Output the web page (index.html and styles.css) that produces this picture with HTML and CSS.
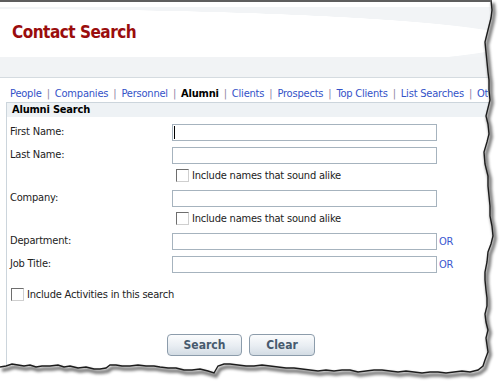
FILE: index.html
```html
<!DOCTYPE html>
<html lang="en">
<head>
    <meta charset="UTF-8">
    <meta name="viewport" content="width=device-width, initial-scale=1.0">
    <title>Contact Search</title>
    <link rel="stylesheet" href="styles.css">
</head>
<body>
    <div class="header">
        <h1>Contact Search</h1>
    </div>
    <div class="band"></div>
    <div class="tabs">
        <a href="#">People</a><span class="sep">|</span><a href="#">Companies</a><span class="sep">|</span><a href="#">Personnel</a><span class="sep">|</span><b>Alumni</b><span class="sep">|</span><a href="#">Clients</a><span class="sep">|</span><a href="#">Prospects</a><span class="sep">|</span><a href="#">Top Clients</a><span class="sep">|</span><a href="#">List Searches</a><span class="sep">|</span><a href="#">Other</a>
    </div>

    <div class="panel">
        <div class="panel-title">Alumni Search</div>
        <div class="form">
            <div class="row first">
                <label>First Name:</label>
                <span class="field"><input type="text"><span class="caret"></span></span>
            </div>
            <div class="row">
                <label>Last Name:</label>
                <input type="text">
            </div>
            <div class="check-row indent">
                <span class="box"></span>Include names that sound alike
            </div>
            <div class="row after-check">
                <label>Company:</label>
                <input type="text">
            </div>
            <div class="check-row indent">
                <span class="box"></span>Include names that sound alike
            </div>
            <div class="row after-check2">
                <label>Department:</label>
                <input type="text"><a href="#" class="or">OR</a>
            </div>
            <div class="row">
                <label>Job Title:</label>
                <input type="text"><a href="#" class="or">OR</a>
            </div>
            <div class="check-row activities">
                <span class="box"></span>Include Activities in this search
            </div>
            <div class="buttons">
                <button>Search</button>
                <button>Clear</button>
            </div>
        </div>
    </div>

    <!-- torn paper edge -->
    <svg class="tear" width="500" height="387" viewBox="0 0 500 387">
        <defs>
            <filter id="soft" x="-10%" y="-10%" width="120%" height="120%">
                <feGaussianBlur stdDeviation="1.6"/>
            </filter>
        </defs>
        <path fill="#fff" d="M491 0 L500 0 L500 387 L0 387 L0 367 L6 366 L12 364 L18 365 L24 366 L30 365 L36 367 L42 366 L50 366 L58 365 L64 367 L70 366 L78 368 L86 367 L94 369 L100 369 L106 368 L110 365 L116 365 L122 366 L130 366 L138 365 L146 366 L154 366 L160 367 L168 368 L176 368 L184 370 L192 370 L200 369 L208 371 L214 373 L218 366 L224 364 L230 364 L238 365 L246 366 L254 366 L262 365 L270 366 L278 367 L286 368 L294 368 L302 369 L310 370 L318 371 L326 370 L334 371 L342 370 L350 370 L358 372 L366 371 L374 370 L382 370 L390 371 L398 372 L406 371 L414 372 L422 373 L430 372 L438 372 L446 373 L454 372 L462 371 L470 372 L478 370 L483 366 L485 360 L488 352 L487 345 L486 338 L488 330 L486 322 L485 314 L487 306 L487 298 L486 290 L485 280 L485 272 L487 262 L488 252 L491 244 L493 236 L492 226 L490 216 L490 206 L489 196 L488 186 L488 176 L485 164 L484 152 L487 142 L489 134 L488 124 L486 116 L488 108 L490 100 L489 90 L489 80 L488 72 L487 62 L486 52 L485 42 L487 34 L489 26 L491 18 L492 10 Z"/>
        <path id="edge" fill="none" d="M0 367 L6 366 L12 364 L18 365 L24 366 L30 365 L36 367 L42 366 L50 366 L58 365 L64 367 L70 366 L78 368 L86 367 L94 369 L100 369 L106 368 L110 365 L116 365 L122 366 L130 366 L138 365 L146 366 L154 366 L160 367 L168 368 L176 368 L184 370 L192 370 L200 369 L208 371 L214 373 L218 366 L224 364 L230 364 L238 365 L246 366 L254 366 L262 365 L270 366 L278 367 L286 368 L294 368 L302 369 L310 370 L318 371 L326 370 L334 371 L342 370 L350 370 L358 372 L366 371 L374 370 L382 370 L390 371 L398 372 L406 371 L414 372 L422 373 L430 372 L438 372 L446 373 L454 372 L462 371 L470 372 L478 370 L483 366 L485 360 L488 352 L487 345 L486 338 L488 330 L486 322 L485 314 L487 306 L487 298 L486 290 L485 280 L485 272 L487 262 L488 252 L491 244 L493 236 L492 226 L490 216 L490 206 L489 196 L488 186 L488 176 L485 164 L484 152 L487 142 L489 134 L488 124 L486 116 L488 108 L490 100 L489 90 L489 80 L488 72 L487 62 L486 52 L485 42 L487 34 L489 26 L491 18 L492 10 L491 0"/>
        <use href="#edge" stroke="#000" stroke-width="3.5" opacity="0.55" filter="url(#soft)" transform="translate(2 3)"/>
        <use href="#edge" stroke="#1c1c1c" stroke-width="1.4"/>
        <line x1="0" y1="1" x2="491" y2="1" stroke="#5e5e5e" stroke-width="2"/>
    </svg>
</body>
</html>
```

FILE: styles.css
```css
body {
    margin: 0;
    font-family: "DejaVu Sans Condensed", "DejaVu Sans", sans-serif;
    font-stretch: condensed;
    font-size: 11px;
    letter-spacing: -0.2px;
    color: #222;
    background: #fff;
    position: relative;
    width: 500px;
    height: 387px;
    overflow: hidden;
}
.header {
    height: 57px;
    box-sizing: border-box;
    padding-top: 21px;
    background:
        linear-gradient(#fff 0 7px, transparent 7px),
        radial-gradient(520px 32px at 0 41px, #fff 99%, transparent 100%),
        #f2f4f6;
}
h1 {
    margin: 0 0 0 12px;
    font-size: 17px;
    line-height: 22px;
    letter-spacing: -0.5px;
    font-weight: bold;
    color: #9a0d0d;
}
.band {
    height: 20px;
    background: #f1f3f5;
    border-bottom: 1px solid #d5dbe0;
}
.tabs {
    width: 488px;
    height: 24px;
    line-height: 14px;
    padding: 9px 0 0 10px;
    box-sizing: border-box;
    white-space: nowrap;
    overflow: hidden;
}
.tabs a {
    color: #3352c8;
    text-decoration: none;
}
.tabs b {
    color: #000;
}
.sep {
    color: #8d86a6;
    margin: 0 5px;
}
.panel {
    margin-left: 6px;
    border-left: 1px solid #ccd5dc;
    height: 300px;
}
.panel-title {
    border-top: 1px solid #ccd5dc;
    background: #eef2f5;
    height: 14px;
    line-height: 14px;
    padding-left: 5px;
    font-weight: bold;
    color: #000;
}
.form {
    padding: 7px 0 0 3px;
}
.row {
    display: flex;
    align-items: center;
    height: 17px;
    margin-top: 6px;
}
.row.first {
    margin-top: 0;
}
.row label {
    width: 162px;
    margin-top: -2px;
}
.row input {
    width: 265px;
    height: 17px;
    box-sizing: border-box;
    border: 1px solid #a6b3be;
    padding: 0 2px;
    margin: 0;
    font: inherit;
}
.field {
    position: relative;
    display: block;
    height: 17px;
}
.caret {
    position: absolute;
    left: 2px;
    top: 2px;
    width: 1px;
    height: 13px;
    background: #000;
}
.or {
    color: #3b58d0;
    text-decoration: none;
    margin-left: 2px;
}
.check-row {
    display: flex;
    align-items: center;
    height: 13px;
    margin: 5px 0 8px;
}
.check-row.indent {
    padding-left: 166px;
}
.row.after-check {
    margin-top: 0;
}
.row.after-check2 {
    margin-top: 1px;
}
.check-row.activities {
    margin: 15px 0 0 1px;
}
.box {
    width: 11px;
    height: 11px;
    border-top: 1px solid #6e6e6e;
    border-left: 1px solid #6e6e6e;
    border-right: 1px solid #cfcfcf;
    border-bottom: 1px solid #cfcfcf;
    background: #fff;
    margin-right: 3px;
    flex: none;
}
.buttons {
    display: flex;
    gap: 7px;
    padding-left: 157px;
    margin-top: 33px;
}
.buttons button {
    height: 22px;
    padding: 0;
    border: 1px solid #8c9cab;
    border-radius: 4px;
    background: linear-gradient(#fbfcfd, #e8edf2 55%, #d3dce4);
    font: inherit;
    font-size: 12px;
    font-weight: bold;
    color: #475a6e;
}
.buttons button:first-child {
    width: 75px;
}
.buttons button:last-child {
    width: 66px;
}
.tear {
    position: absolute;
    left: 0;
    top: 0;
}
```
